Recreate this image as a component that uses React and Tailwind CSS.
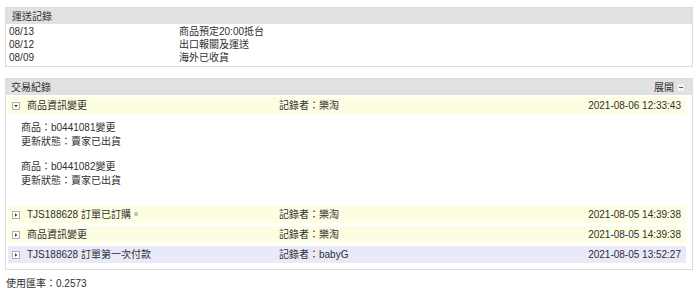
import React from 'react';

const shipping = [
  { date: '08/13', note: '商品預定20:00抵台' },
  { date: '08/12', note: '出口報關及運送' },
  { date: '08/09', note: '海外已收貨' },
];

const logs = [
  {
    title: '商品資訊變更',
    by: '樂淘',
    time: '2021-08-06 12:33:43',
    open: true,
    tone: 'yellow',
    details: [
      ['商品：b0441081變更', '更新狀態：賣家已出貨'],
      ['商品：b0441082變更', '更新狀態：賣家已出貨'],
    ],
  },
  { title: 'TJS188628 訂單已訂購。', by: '樂淘', time: '2021-08-05 14:39:38', tone: 'yellow' },
  { title: '商品資訊變更', by: '樂淘', time: '2021-08-05 14:39:38', tone: 'yellow' },
  { title: 'TJS188628 訂單第一次付款', by: 'babyG', time: '2021-08-05 13:52:27', tone: 'blue' },
];

function Toggle({ open }) {
  return (
    <svg width="8" height="8" viewBox="0 0 8 8" className="shrink-0">
      <rect x="0.5" y="0.5" width="7" height="7" fill="#fff" stroke="#b0b0b0" />
      {open ? (
        <path d="M2.2 3 L5.8 3 L4 5.3 Z" fill="#333" />
      ) : (
        <path d="M3 2.2 L5.3 4 L3 5.8 Z" fill="#333" />
      )}
    </svg>
  );
}

function LogRow({ log }) {
  return (
    <div
      className={`grid grid-cols-[271px_1fr_auto] items-center h-[17px] ${
        log.tone === 'blue' ? 'bg-[#e8e9f9]' : 'bg-[#fdfde2]'
      }`}
    >
      <div className="flex items-center gap-[7px] pl-[4px]">
        <Toggle open={log.open} />
        <span>{log.title}</span>
      </div>
      <span>記錄者：{log.by}</span>
      <span className="pr-[5px]">{log.time}</span>
    </div>
  );
}

export default function App() {
  return (
    <div
      className="w-[700px] h-[296px] bg-white text-[#2f2f2f] text-[10px] leading-[13px] pl-[5px] pt-[7px]"
      style={{ fontFamily: '"Liberation Sans", "Noto Sans CJK TC", sans-serif' }}
    >
      {/* 運送記錄 */}
      <div className="w-[688px] border border-[#dcdcdc]">
        <div className="h-[16px] bg-[#e1e1e1] pl-[6px] flex items-center">運送記錄</div>
        <div className="pt-[1px] pb-[2px] pl-[3px]">
          {shipping.map((s) => (
            <div key={s.date} className="grid grid-cols-[170px_1fr]">
              <span>{s.date}</span>
              <span>{s.note}</span>
            </div>
          ))}
        </div>
      </div>

      {/* 交易紀錄 */}
      <div className="w-[688px] mt-[11px] border border-[#dcdcdc]">
        <div className="h-[16px] bg-[#e1e1e1] pl-[5px] pr-[8px] flex items-center justify-between">
          <span>交易紀錄</span>
          <div className="flex items-center gap-[4px]">
            <span>展開</span>
            <span className="w-[6px] h-[7px] bg-[#f4f4f4] flex items-center justify-center">
              <span className="w-[4px] h-px bg-[#555]" />
            </span>
          </div>
        </div>
        <div className="pl-[2px] pr-[6px] pt-[2px] pb-[6px]">
          {logs.map((log, i) => (
            <div key={i} className={i > 1 ? 'mt-[3px]' : ''}>
              <LogRow log={log} />
              {log.details && (
                <div className="pl-[13px] pt-[7px] pb-[18px] leading-[14px] flex flex-col gap-[11px]">
                  {log.details.map((d, j) => (
                    <div key={j}>
                      {d.map((line) => (
                        <div key={line}>{line}</div>
                      ))}
                    </div>
                  ))}
                </div>
              )}
            </div>
          ))}
        </div>
      </div>

      <div className="mt-[7px] leading-[14px] pl-[1px]">使用匯率：0.2573</div>
    </div>
  );
}
